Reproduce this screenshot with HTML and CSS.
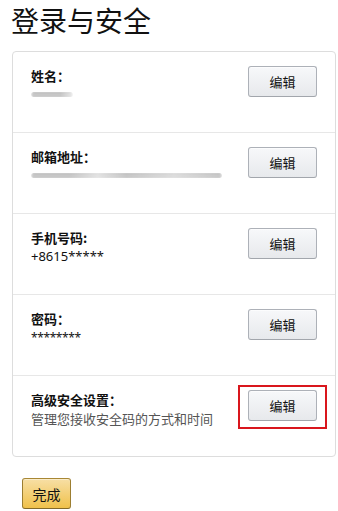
FILE: index.html
```html
<!DOCTYPE html>
<html lang="zh-CN">
<head>
<meta charset="utf-8">
<title>登录与安全</title>
<link rel="stylesheet" href="styles.css">
</head>
<body>
<h1 class="title">登录与安全</h1>
<div class="card">
  <div class="row">
    <div class="info">
      <div class="label">姓名：</div>
      <div class="value"><span class="blur blur-name"></span></div>
    </div>
    <button class="btn">编辑</button>
  </div>
  <div class="row">
    <div class="info">
      <div class="label">邮箱地址：</div>
      <div class="value"><span class="blur blur-mail"></span></div>
    </div>
    <button class="btn">编辑</button>
  </div>
  <div class="row">
    <div class="info">
      <div class="label">手机号码:</div>
      <div class="value">+8615*****</div>
    </div>
    <button class="btn">编辑</button>
  </div>
  <div class="row">
    <div class="info">
      <div class="label">密码：</div>
      <div class="value stars">********</div>
    </div>
    <button class="btn">编辑</button>
  </div>
  <div class="row">
    <div class="info">
      <div class="label">高级安全设置：</div>
      <div class="value sub">管理您接收安全码的方式和时间</div>
    </div>
    <div class="highlight"><button class="btn">编辑</button></div>
  </div>
</div>
<button class="done">完成</button>
</body>
</html>
```
FILE: styles.css
```css
html, body {
  margin: 0;
  padding: 0;
  background: #fff;
}
body {
  padding: 0 3px 0 12px;
  font-family: "Noto Sans", "Noto Sans CJK SC", sans-serif;
  color: #111;
  font-size: 13px;
}
.title {
  margin: 3px 0 14px -1px;
  font-size: 28px;
  line-height: 34px;
  font-weight: normal;
  color: #111;
  font-family: "Noto Sans CJK SC", sans-serif;
}
.card {
  border: 1px solid #ddd;
  border-radius: 4px;
  width: 324px;
  box-sizing: border-box;
}
.row {
  box-sizing: border-box;
  height: 80px;
  padding: 14px 18px 0 18px;
  display: flex;
  justify-content: space-between;
  align-items: flex-start;
}
.row + .row {
  height: 81px;
  border-top: 1px solid #e7e7e7;
}
.info {
  line-height: 19px;
}
.label {
  font-weight: bold;
  font-family: "Noto Sans CJK SC", sans-serif;
}
.value {
  height: 19px;
}
.blur {
  display: block;
  margin-top: 7px;
  height: 5px;
  border-radius: 3px;
  background: linear-gradient(#7f7f7f, #e8e8e8 50%, #8a8a8a);
  filter: blur(0.9px);
}
.blur-name {
  width: 42px;
  background: linear-gradient(#7f7f7f, #e8e8e8 50%, #8a8a8a);
  -webkit-mask-image: linear-gradient(90deg, #000 70%, rgba(0,0,0,0.4));
  mask-image: linear-gradient(90deg, #000 70%, rgba(0,0,0,0.4));
}
.blur-mail {
  width: 191px;
  -webkit-mask-image: linear-gradient(90deg, #000 20%, rgba(0,0,0,0.5) 35%, #000 50%, rgba(0,0,0,0.6) 75%, #000);
  mask-image: linear-gradient(90deg, #000 20%, rgba(0,0,0,0.5) 35%, #000 50%, rgba(0,0,0,0.6) 75%, #000);
}
.stars {
  font-size: 12px;
  letter-spacing: -0.4px;
}
.sub {
  color: #555;
  font-family: "Noto Sans CJK SC", sans-serif;
}
.btn {
  width: 69px;
  height: 31px;
  margin: 0;
  padding: 0;
  border: 1px solid #adb1b8;
  border-bottom-color: #a2a6ac;
  border-radius: 3px;
  background: linear-gradient(#f7f8fa, #e7e9ec);
  box-shadow: inset 0 1px 0 rgba(255,255,255,0.6);
  font-family: "Noto Sans CJK SC", sans-serif;
  font-size: 13px;
  color: #111;
}
.highlight {
  position: relative;
}
.highlight::after {
  content: "";
  position: absolute;
  top: -5px;
  left: -10px;
  right: -10px;
  bottom: -8px;
  border: 2px solid #d9161d;
}
.done {
  display: block;
  margin: 21px 0 0 10px;
  width: 49px;
  height: 31px;
  padding: 0;
  border: 1px solid #a88734;
  border-color: #a88734 #9c7e31 #846a29;
  border-radius: 3px;
  background: linear-gradient(#f7dfa5, #f0c14b);
  box-shadow: inset 0 1px 0 rgba(255,255,255,0.4);
  font-family: "Noto Sans CJK SC", sans-serif;
  font-size: 14px;
  color: #111;
}
```
